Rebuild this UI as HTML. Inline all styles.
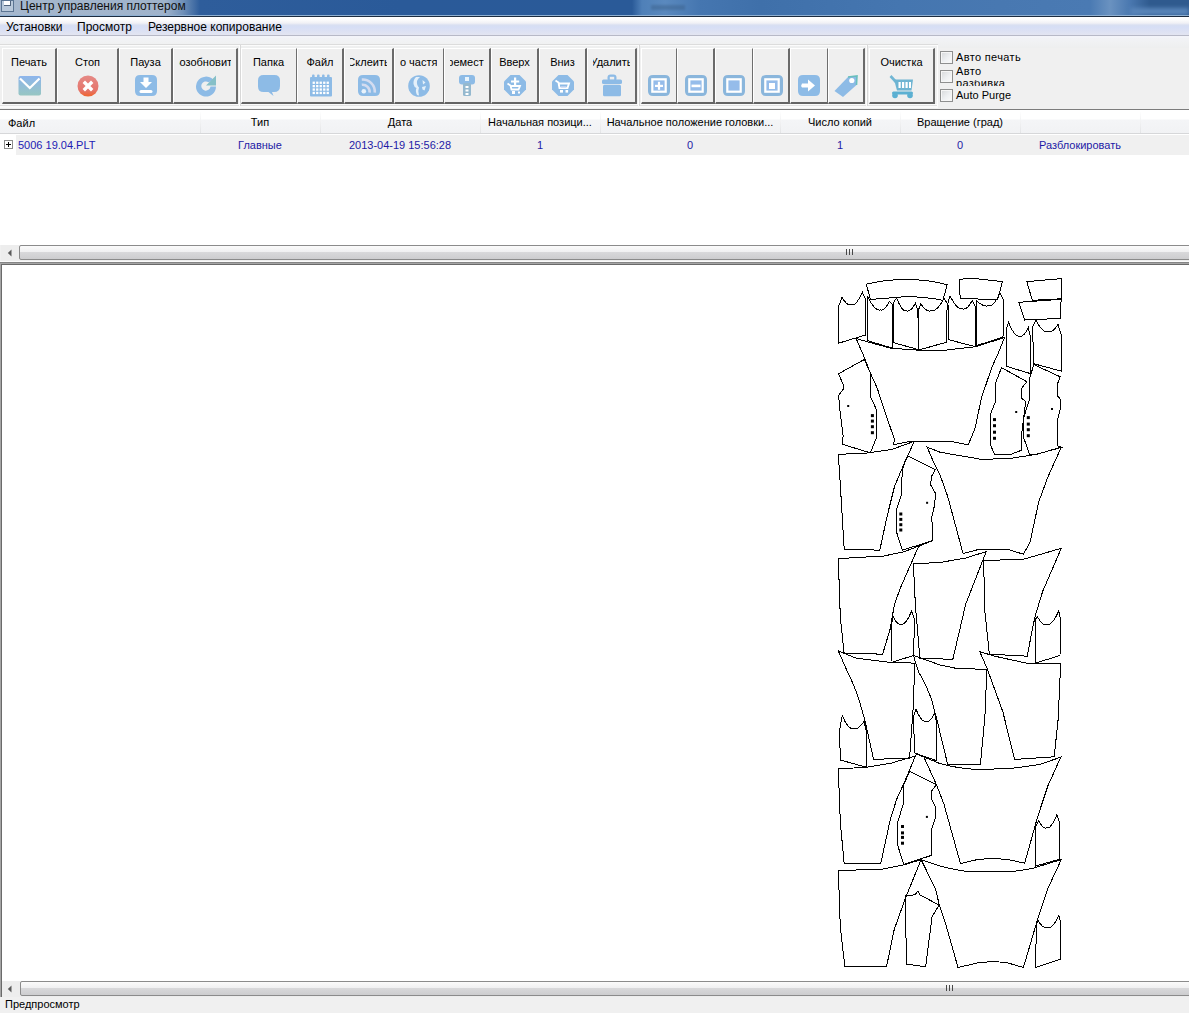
<!DOCTYPE html><html><head><meta charset="utf-8"><style>
*{margin:0;padding:0;box-sizing:border-box}
html,body{width:1189px;height:1013px;overflow:hidden;background:#f0f0f0;font-family:"Liberation Sans",sans-serif;color:#000}
.a{position:absolute}
.t{position:absolute;white-space:nowrap;line-height:14px;height:14px}
.btn{position:absolute;top:48px;height:56px;background:#efefef;border-left:1px solid #fff;border-top:1px solid #fff;border-right:2px solid #6a6a6a;border-bottom:2px solid #646464}
.lbl{position:absolute;top:6px;height:14px;display:flex;justify-content:center;overflow:hidden;font-size:11px;line-height:14px;white-space:nowrap}
.ico{position:absolute;top:25px}
.cell{position:absolute;top:0;height:23px;display:flex;justify-content:center;line-height:23px;white-space:nowrap;overflow:hidden}
.cb{position:absolute;left:940px;width:13px;height:13px;border:1px solid #8e8f8f;background:linear-gradient(135deg,#d6d8da 0,#eef0f2 55%,#fbfbfb 100%);box-shadow:inset 0 0 0 1px #f6f6f6}
</style></head><body>
<div class="a" style="left:0;top:0;width:1189px;height:16px;background:linear-gradient(90deg,#a6b8ce 0,#9fb3cb 165px,#6f90b8 183px,#2e5d9b 200px,#2a5a99 400px,#2a5a98 632px,#4f80b8 642px,#5a89be 665px,#4576b0 700px,#3f70aa 760px,#4576b0 900px,#4878b1 1000px,#4a7ab3 1090px,#6a92c0 1110px,#4a78b0 1130px,#2f5a8e 1150px,#2f5a8e 1189px)"></div>
<div class="a" style="left:1130px;top:8px;width:59px;height:7px;background:#5a86ba;filter:blur(2px)"></div>
<div class="a" style="left:651px;top:5px;width:34px;height:5px;background:#3a5f88;opacity:.45;filter:blur(1.2px)"></div>
<div class="a" style="left:0;top:15px;width:1189px;height:1px;background:#8fb0d2"></div>
<div class="a" style="left:0;top:16px;width:1189px;height:1px;background:#1c2c40"></div>
<div class="a" style="left:1px;top:0;width:13px;height:12px;border:1px solid #5b7593;background:#b9c9db"></div>
<div class="a" style="left:4px;top:1px;width:7px;height:5px;background:#fff;border-right:1px solid #50647e;border-bottom:1px solid #50647e"></div>
<div class="t" style="left:20px;top:-1px;font-size:12px;color:#101010">Центр управления плоттером</div>
<div class="a" style="left:0;top:17px;width:1189px;height:19px;background:linear-gradient(180deg,#ffffff 0,#fbfbfc 3px,#f1f1f5 6px,#e6e9f4 7px,#d9dff1 8px,#d6def5 10px,#dce1f3 14px,#e3e5f1 18px);border-bottom:1px solid #b7b9c7"></div>
<div class="a" style="left:0;top:36px;width:1189px;height:2px;background:#f3f4f9"></div>
<div class="t" style="left:6px;top:20px;font-size:12px">Установки</div>
<div class="t" style="left:77px;top:20px;font-size:12px">Просмотр</div>
<div class="t" style="left:148px;top:20px;font-size:12px">Резервное копирование</div>
<div class="a" style="left:0;top:38px;width:1189px;height:10px;background:linear-gradient(180deg,#f2f3f6,#eeefef)"></div>
<div class="a" style="left:0;top:44px;width:938px;height:1px;background:#dcdcdc"></div>
<div class="a" style="left:0;top:45px;width:938px;height:1px;background:#fbfbfb"></div>
<div class="a" style="left:0;top:104px;width:938px;height:1px;background:#fafafa"></div>
<div class="a" style="left:0;top:105px;width:938px;height:1px;background:#e2e2e2"></div>
<div class="a" style="left:0;top:106px;width:938px;height:2px;background:#fafafa"></div>
<div class="a" style="left:239px;top:45px;width:1px;height:61px;background:#fdfdfd"></div>
<div class="a" style="left:240px;top:45px;width:1px;height:61px;background:#d8d8d8"></div>
<div class="a" style="left:638px;top:45px;width:1px;height:61px;background:#fdfdfd"></div>
<div class="a" style="left:639px;top:45px;width:1px;height:61px;background:#d8d8d8"></div>
<div class="a" style="left:866px;top:45px;width:1px;height:61px;background:#fdfdfd"></div>
<div class="a" style="left:867px;top:45px;width:1px;height:61px;background:#d8d8d8"></div>
<div class="a" style="left:937px;top:45px;width:1px;height:61px;background:#fdfdfd"></div>
<div class="btn" style="left:2px;width:55px"><div class="lbl" style="left:5px;width:42px"><span>Печать</span></div><div class="ico" style="left:15px"><svg width="24" height="24" viewBox="0 0 24 24"><defs><linearGradient id="gm" x1="0" y1="0" x2="0" y2="1"><stop offset="0" stop-color="#8db5ec"/><stop offset="1" stop-color="#97c6c2"/></linearGradient></defs><rect x="0.5" y="2" width="22.5" height="19.5" rx="2" fill="url(#gm)"/><path d="M2 4.5 L11.8 14 L21.5 4.5" stroke="#fff" stroke-width="2.2" fill="none"/></svg></div></div>
<div class="btn" style="left:57px;width:62px"><div class="lbl" style="left:5px;width:49px"><span>Стоп</span></div><div class="ico" style="left:18px"><svg width="24" height="24" viewBox="0 0 24 24"><defs><linearGradient id="gs" x1="0" y1="0" x2="0" y2="1"><stop offset="0" stop-color="#e58a86"/><stop offset="0.7" stop-color="#e5756c"/><stop offset="1" stop-color="#f0642c"/></linearGradient></defs><circle cx="12" cy="12" r="10.5" fill="url(#gs)"/><path d="M7.8 7.8 L16.2 16.2 M16.2 7.8 L7.8 16.2" stroke="#fff" stroke-width="3.4"/></svg></div></div>
<div class="btn" style="left:119px;width:54px"><div class="lbl" style="left:5px;width:41px"><span>Пауза</span></div><div class="ico" style="left:14px"><svg width="24" height="24" viewBox="0 0 24 24"><path d="M6 1 H18 Q23 1 23 6 V17 Q23 22 18 22 H6 Q1 22 1 17 V6 Q1 1 6 1 Z" fill="#8dbbe6"/><path d="M9.5 3.5 H14.5 V8 H18 L12 14 L6 8 H9.5 Z" fill="#fff"/><rect x="5.5" y="16" width="13" height="3" rx="1.5" fill="#fff"/></svg></div></div>
<div class="btn" style="left:173px;width:65px"><div class="lbl" style="left:5px;width:52px"><span>Возобновить</span></div><div class="ico" style="left:20px"><svg width="24" height="24" viewBox="0 0 24 24"><path d="M19.5 6 A10 10 0 1 0 22 12.5 L16.5 12.5 A4.6 4.6 0 1 1 14.5 8.2 Z" fill="#8dbbe6"/><path d="M12 11.5 L22 11.5 L22 1.5 Z" fill="#86c0c8"/></svg></div></div>
<div class="btn" style="left:241px;width:56px;border-right:1px solid #6e6e6e"><div class="lbl" style="left:5px;width:43px"><span>Папка</span></div><div class="ico" style="left:15px"><svg width="24" height="24" viewBox="0 0 24 24"><path d="M6.5 1 H17.5 Q23 1 23 6.5 V12 Q23 18 17 18 H15 L16.5 22 L11.5 18 H6.5 Q1 18 1 12.5 V6.5 Q1 1 6.5 1 Z" fill="#8dbbe6"/></svg></div></div>
<div class="btn" style="left:297px;width:47px"><div class="lbl" style="left:5px;width:34px"><span>Файл</span></div><div class="ico" style="left:11px"><svg width="24" height="24" viewBox="0 0 24 24"><rect x="1" y="3" width="22" height="19.5" rx="1" fill="#8dbbe6"/><rect x="3" y="0.5" width="2.6" height="5" rx="1" fill="#8dbbe6"/><rect x="8" y="0.5" width="2.6" height="5" rx="1" fill="#8dbbe6"/><rect x="13" y="0.5" width="2.6" height="5" rx="1" fill="#8dbbe6"/><rect x="18" y="0.5" width="2.6" height="5" rx="1" fill="#8dbbe6"/><rect x="3.6" y="7.6" width="2.3" height="2.3" fill="#fff"/><rect x="3.6" y="11.0" width="2.3" height="2.3" fill="#fff"/><rect x="3.6" y="14.4" width="2.3" height="2.3" fill="#fff"/><rect x="3.6" y="17.8" width="2.3" height="2.3" fill="#fff"/><rect x="7.1" y="7.6" width="2.3" height="2.3" fill="#fff"/><rect x="7.1" y="11.0" width="2.3" height="2.3" fill="#fff"/><rect x="7.1" y="14.4" width="2.3" height="2.3" fill="#fff"/><rect x="7.1" y="17.8" width="2.3" height="2.3" fill="#fff"/><rect x="10.6" y="7.6" width="2.3" height="2.3" fill="#fff"/><rect x="10.6" y="11.0" width="2.3" height="2.3" fill="#fff"/><rect x="10.6" y="14.4" width="2.3" height="2.3" fill="#fff"/><rect x="10.6" y="17.8" width="2.3" height="2.3" fill="#fff"/><rect x="14.1" y="7.6" width="2.3" height="2.3" fill="#fff"/><rect x="14.1" y="11.0" width="2.3" height="2.3" fill="#fff"/><rect x="14.1" y="14.4" width="2.3" height="2.3" fill="#fff"/><rect x="14.1" y="17.8" width="2.3" height="2.3" fill="#fff"/><rect x="17.6" y="7.6" width="2.3" height="2.3" fill="#fff"/><rect x="17.6" y="11.0" width="2.3" height="2.3" fill="#fff"/><rect x="17.6" y="14.4" width="2.3" height="2.3" fill="#fff"/><rect x="17.6" y="17.8" width="2.3" height="2.3" fill="#fff"/></svg></div></div>
<div class="btn" style="left:344px;width:50px"><div class="lbl" style="left:5px;width:37px"><span>Склеить</span></div><div class="ico" style="left:12px"><svg width="24" height="24" viewBox="0 0 24 24"><path d="M6 1 H18 Q23 1 23 6 V17 Q23 22 18 22 H6 Q1 22 1 17 V6 Q1 1 6 1 Z" fill="#8dbbe6"/><circle cx="6.8" cy="17.2" r="2.3" fill="#e8f2fb"/><path d="M4.8 10.8 A7 7 0 0 1 12.6 18.6" stroke="#d3dcf0" stroke-width="2.6" fill="none"/><path d="M4.8 5.6 A12.2 12.2 0 0 1 17.8 18.6" stroke="#d3dcf0" stroke-width="2.6" fill="none"/></svg></div></div>
<div class="btn" style="left:394px;width:50px;border-right:1px solid #6e6e6e"><div class="lbl" style="left:5px;width:37px"><span>По частям</span></div><div class="ico" style="left:12px"><svg width="24" height="24" viewBox="0 0 24 24"><circle cx="12" cy="12" r="10.8" fill="#8dbbe6"/><path d="M9 3 Q6 6 6.5 10 Q7 13 9.5 14 Q8 17 10 21 L12 21.5 Q10.5 17 12 13.5 Q9.5 11 10 7 Q11 4.5 13 3 Z" fill="#e4f0fa"/><path d="M15.5 6 L18.5 8.5 L16 10.5 Z M15 13 L19 12 L17.5 16.5 L15.5 15.5 Z" fill="#e4f0fa"/></svg></div></div>
<div class="btn" style="left:444px;width:47px"><div class="lbl" style="left:5px;width:34px"><span>Переместить</span></div><div class="ico" style="left:13px"><svg width="18" height="24" viewBox="0 0 18 24"><rect x="1" y="1" width="16" height="9.5" rx="3" fill="#8dbbe6"/><rect x="5" y="9" width="8" height="13" rx="1.5" fill="#95b9cf"/><rect x="7" y="3" width="4" height="4" fill="#e8f4fc"/><rect x="7.5" y="12" width="3" height="2" fill="#fff"/><rect x="7.5" y="15.5" width="3" height="2" fill="#fff"/><rect x="7.5" y="19" width="3" height="2" fill="#fff"/></svg></div></div>
<div class="btn" style="left:491px;width:48px"><div class="lbl" style="left:5px;width:35px"><span>Вверх</span></div><div class="ico" style="left:11px"><svg width="24" height="24" viewBox="0 0 24 24"><path d="M7.5 1 H16.5 L23 7.5 V15.5 L16.5 22 H7.5 L1 15.5 V7.5 Z" fill="#8dbbe6"/><path d="M11 3.5 H13.2 V6.5 H16.2 V8.6 H13.2 V11 H11 V8.6 H8 V6.5 H11 Z" fill="#fff"/><path d="M4.5 9.5 L7.5 11.5 L8.5 15.5 H15.5 L17 12 H8.5" stroke="#fff" stroke-width="1.8" fill="none"/><rect x="9" y="17" width="3" height="3" fill="#fff"/><rect x="15" y="17.5" width="2" height="2" fill="#fff"/></svg></div></div>
<div class="btn" style="left:539px;width:48px"><div class="lbl" style="left:5px;width:35px"><span>Вниз</span></div><div class="ico" style="left:11px"><svg width="24" height="24" viewBox="0 0 24 24"><path d="M7.5 1 H16.5 L23 7.5 V15.5 L16.5 22 H7.5 L1 15.5 V7.5 Z" fill="#8dbbe6"/><path d="M4.5 6.5 L7.5 8.5 L8.5 14 H16.5 L18 9.5 H8.5" stroke="#fff" stroke-width="1.9" fill="none"/><rect x="9.5" y="12" width="6" height="1.6" fill="#bcd0f0"/><rect x="9" y="16" width="3" height="2.6" fill="#fff"/><rect x="14.5" y="16" width="2.6" height="2.6" fill="#fff"/></svg></div></div>
<div class="btn" style="left:587px;width:50px"><div class="lbl" style="left:5px;width:37px"><span>Удалить</span></div><div class="ico" style="left:12px"><svg width="24" height="24" viewBox="0 0 24 24"><rect x="7.5" y="0.5" width="9" height="7" rx="3" fill="#8dbbe6"/><rect x="9.8" y="2.8" width="4.4" height="3" fill="#efefef"/><rect x="2" y="5.5" width="20" height="4.5" rx="1.5" fill="#8dbbe6"/><rect x="3" y="10.8" width="18" height="11.5" rx="1.5" fill="#8dbbe6"/></svg></div></div>
<div class="btn" style="left:641px;width:36px;border-right:1px solid #6e6e6e"><div class="ico" style="left:5px"><svg width="24" height="24" viewBox="0 0 24 24"><path d="M6 1 H18 Q23 1 23 6 V17 Q23 22 18 22 H6 Q1 22 1 17 V6 Q1 1 6 1 Z" fill="#8ab6dc"/><rect x="5.3" y="5.3" width="13.4" height="12.4" fill="#95bcea" stroke="#fff" stroke-width="2.2"/><rect x="8" y="10.8" width="8" height="2.2" fill="#fff"/><rect x="10.9" y="7.8" width="2.2" height="8" fill="#fff"/></svg></div></div>
<div class="btn" style="left:677px;width:38px"><div class="ico" style="left:6px"><svg width="24" height="24" viewBox="0 0 24 24"><path d="M6 1 H18 Q23 1 23 6 V17 Q23 22 18 22 H6 Q1 22 1 17 V6 Q1 1 6 1 Z" fill="#8ab6dc"/><rect x="5.3" y="5.3" width="13.4" height="12.4" fill="#95bcea" stroke="#fff" stroke-width="2.2"/><rect x="7.5" y="10.6" width="9" height="2.6" fill="#fff"/></svg></div></div>
<div class="btn" style="left:715px;width:38px;border-right:1px solid #6e6e6e"><div class="ico" style="left:6px"><svg width="24" height="24" viewBox="0 0 24 24"><path d="M6 1 H18 Q23 1 23 6 V17 Q23 22 18 22 H6 Q1 22 1 17 V6 Q1 1 6 1 Z" fill="#8ab6dc"/><rect x="5.3" y="5.3" width="13.4" height="12.4" fill="#95bcea" stroke="#fff" stroke-width="2.2"/></svg></div></div>
<div class="btn" style="left:753px;width:37px"><div class="ico" style="left:6px"><svg width="24" height="24" viewBox="0 0 24 24"><path d="M6 1 H18 Q23 1 23 6 V17 Q23 22 18 22 H6 Q1 22 1 17 V6 Q1 1 6 1 Z" fill="#8ab6dc"/><rect x="5.3" y="5.3" width="13.4" height="12.4" fill="#95bcea" stroke="#fff" stroke-width="2.2"/><rect x="9" y="9" width="6" height="6" fill="#fff"/></svg></div></div>
<div class="btn" style="left:790px;width:38px;border-right:1px solid #6e6e6e"><div class="ico" style="left:6px"><svg width="24" height="24" viewBox="0 0 24 24"><path d="M6 1 H18 Q23 1 23 6 V17 Q23 22 18 22 H6 Q1 22 1 17 V6 Q1 1 6 1 Z" fill="#8dbbe6"/><path d="M5 9.5 H11 V5.5 L18 11.5 L11 17.5 V13.5 H5 Q3.5 11.5 5 9.5 Z" fill="#fff"/></svg></div></div>
<div class="btn" style="left:828px;width:37px"><div class="ico" style="left:4px"><svg width="26" height="24" viewBox="0 0 26 24"><path d="M1.5 17 L15 3 L24 2 L23.5 11 L10 23 Z" fill="#8dbbe6"/><path d="M15 3 L24 2 L23.5 11" stroke="#69bfbd" stroke-width="1.6" fill="none"/><circle cx="18.8" cy="6.5" r="2.6" fill="#fff"/></svg></div></div>
<div class="btn" style="left:869px;width:66px"><div class="lbl" style="left:5px;width:53px"><span>Очистка</span></div><div class="ico" style="left:19px"><svg width="26" height="24" viewBox="0 0 26 24" style="margin-top:1px"><path d="M1.5 1 L7 7" stroke="#71b6d4" stroke-width="2.6"/><path d="M5 4.5 H24 L22.5 15.5 H8 Z" fill="#6eb4d2"/><rect x="9.5" y="7" width="2.2" height="6" fill="#fff"/><rect x="13" y="7" width="2.2" height="6" fill="#fff"/><rect x="16.5" y="7" width="2.2" height="6" fill="#fff"/><rect x="20" y="7" width="2" height="6" fill="#fff"/><rect x="3" y="16.5" width="21" height="3" rx="1.5" fill="#5cb0d2"/><circle cx="6" cy="20.5" r="2.8" fill="#5cb0d2"/><circle cx="21" cy="20.5" r="2.8" fill="#5cb0d2"/></svg></div></div>
<div class="cb" style="top:51px"></div>
<div class="cb" style="top:70px"></div>
<div class="cb" style="top:89px"></div>
<div class="t" style="left:956px;top:50px;font-size:11px;letter-spacing:0.35px">Авто печать</div>
<div class="t" style="left:956px;top:64px;font-size:11px;letter-spacing:0.35px">Авто</div>
<div class="a" style="left:956px;top:80px;width:80px;height:6px;overflow:hidden"><div class="t" style="left:0;top:-4px;font-size:11px;letter-spacing:0.35px">разбивка</div></div>
<div class="t" style="left:956px;top:88px;font-size:11px">Auto Purge</div>
<div class="a" style="left:0;top:109px;width:1189px;height:1px;background:#7c7c7c"></div>
<div class="a" style="left:0;top:110px;width:1189px;height:135px;background:#fff"></div>
<div class="a" style="left:0;top:110px;width:1189px;height:24px;background:linear-gradient(180deg,#ffffff 0,#ffffff 9px,#f4f5f7 10px,#f1f2f4 100%)"></div>
<div class="a" style="left:0;top:133px;width:1189px;height:1px;background:#d6d7d9"></div>
<div class="a" style="left:200px;top:111px;width:1px;height:22px;background:linear-gradient(180deg,#fff,#e3e4e6)"></div>
<div class="a" style="left:320px;top:111px;width:1px;height:22px;background:linear-gradient(180deg,#fff,#e3e4e6)"></div>
<div class="a" style="left:480px;top:111px;width:1px;height:22px;background:linear-gradient(180deg,#fff,#e3e4e6)"></div>
<div class="a" style="left:600px;top:111px;width:1px;height:22px;background:linear-gradient(180deg,#fff,#e3e4e6)"></div>
<div class="a" style="left:780px;top:111px;width:1px;height:22px;background:linear-gradient(180deg,#fff,#e3e4e6)"></div>
<div class="a" style="left:900px;top:111px;width:1px;height:22px;background:linear-gradient(180deg,#fff,#e3e4e6)"></div>
<div class="a" style="left:1020px;top:111px;width:1px;height:22px;background:linear-gradient(180deg,#fff,#e3e4e6)"></div>
<div class="a" style="left:1140px;top:111px;width:1px;height:22px;background:linear-gradient(180deg,#fff,#e3e4e6)"></div>
<div class="t" style="left:8px;top:116px;font-size:11px">Файл</div>
<div class="cell" style="left:200px;width:120px;top:111px;font-size:11px">Тип</div>
<div class="cell" style="left:320px;width:160px;top:111px;font-size:11px">Дата</div>
<div class="cell" style="left:480px;width:120px;top:111px;font-size:11px">Начальная позици...</div>
<div class="cell" style="left:600px;width:180px;top:111px;font-size:11px">Начальное положение головки...</div>
<div class="cell" style="left:780px;width:120px;top:111px;font-size:11px">Число копий</div>
<div class="cell" style="left:900px;width:120px;top:111px;font-size:11px">Вращение (град)</div>
<div class="cell" style="left:1020px;width:120px;top:111px;font-size:11px"></div>
<div class="a" style="left:16px;top:135px;width:1173px;height:20px;background:#f0f0f0"></div>
<div class="a" style="left:4px;top:140px;width:9px;height:9px;border:1px solid #8c8c8c;background:#fff"></div>
<div class="a" style="left:6px;top:144px;width:5px;height:1px;background:#000"></div>
<div class="a" style="left:8px;top:142px;width:1px;height:5px;background:#000"></div>
<div class="t" style="left:18px;top:138px;font-size:11px;color:#2220b4">5006 19.04.PLT</div>
<div class="cell" style="left:200px;width:120px;top:135px;height:21px;line-height:21px;font-size:11px;color:#1e1aa6">Главные</div>
<div class="cell" style="left:320px;width:160px;top:135px;height:21px;line-height:21px;font-size:11px;color:#1e1aa6">2013-04-19 15:56:28</div>
<div class="cell" style="left:480px;width:120px;top:135px;height:21px;line-height:21px;font-size:11px;color:#1e1aa6">1</div>
<div class="cell" style="left:600px;width:180px;top:135px;height:21px;line-height:21px;font-size:11px;color:#1e1aa6">0</div>
<div class="cell" style="left:780px;width:120px;top:135px;height:21px;line-height:21px;font-size:11px;color:#1e1aa6">1</div>
<div class="cell" style="left:900px;width:120px;top:135px;height:21px;line-height:21px;font-size:11px;color:#1e1aa6">0</div>
<div class="cell" style="left:1020px;width:120px;top:135px;height:21px;line-height:21px;font-size:11px;color:#1e1aa6">Разблокировать</div>
<div class="a" style="left:1px;top:245px;width:1188px;height:16px;background:#ededed"></div><svg class="a" style="left:7px;top:249px" width="5" height="8" viewBox="0 0 5 8"><path d="M4.5 0.5 L0.8 4 L4.5 7.5 Z" fill="#5a5a5a"/></svg><div class="a" style="left:19px;top:245px;width:1174px;height:15px;border:1px solid #8b8b8b;border-radius:2px;background:linear-gradient(180deg,#fbfbfb 0,#f0f0f1 45%,#d9d9db 46%,#cdcdcf 100%)"></div><div class="a" style="left:846px;top:249px;width:1px;height:6px;background:#484848"></div><div class="a" style="left:849px;top:249px;width:1px;height:6px;background:#484848"></div><div class="a" style="left:852px;top:249px;width:1px;height:6px;background:#484848"></div>
<div class="a" style="left:0;top:261px;width:1189px;height:1px;background:#fafafa"></div>
<div class="a" style="left:0;top:262px;width:1189px;height:1px;background:#858585"></div>
<div class="a" style="left:0;top:263px;width:1189px;height:1px;background:#a5a5a5"></div>
<div class="a" style="left:1px;top:264px;width:1188px;height:1px;background:#6a6a6a"></div>
<div class="a" style="left:0;top:263px;width:1px;height:734px;background:#a5a5a5"></div>
<div class="a" style="left:1px;top:264px;width:1px;height:733px;background:#6a6a6a"></div>
<div class="a" style="left:2px;top:265px;width:1187px;height:716px;background:#fff"></div>
<svg class="a" style="left:0;top:0" width="1189" height="1013" viewBox="0 0 1189 1013">
<g fill="none" stroke="#000" stroke-width="1" stroke-linejoin="miter" shape-rendering="crispEdges">
<path d="M838.6 343.2 L838.6 306.3 L842.1 297.3 Q847.1 306.3 851.2 304.8 Q856.2 306.3 862.3 292.2 L865.3 298.3 L865.3 335.1 Z"/>
<path d="M866.3 284.1 Q907.7 274.5 947.1 284.6 L943 300.3 Q919 295.5 896.6 297.3 Q880 299 870.4 299.3 Z"/>
<path d="M867.3 340.6 L867.3 298.0 L867.8 296.7 Q874.8 311.4 880.5 309.9 Q884.5 311.4 889.5 301.3 L892.6 304.3 L892.6 348.2 Z"/>
<path d="M893.6 342.7 L893.6 302.3 L896.6 297.8 Q902.2 312.4 906.7 310.9 Q910.6 312.4 915.3 303.3 L917.8 310.4 L918.8 349.7 Z"/>
<path d="M918.8 350.0 L918.3 310.4 L920.8 303.8 Q926.4 312.4 930.9 310.9 Q936.8 312.4 944.0 298.3 L947.1 303.3 L946.6 342.2 Z"/>
<path d="M959.6 279.1 L975.3 278.6 L1002.5 281.6 L997.5 299.8 L960.1 298.3 Z"/>
<path d="M948.5 339.6 L948.0 303.3 L950.0 295.7 Q957.0 310.4 962.7 308.9 Q967.0 310.4 972.3 300.3 L975.3 306.3 L975.3 346.7 Z"/>
<path d="M976.3 345.7 L976.3 300.3 L976.3 300.3 Q983.0 307.3 988.4 305.8 Q993.6 307.3 1000.0 292.7 L1003.5 300.3 L1003.0 337.1 Z"/>
<path d="M1026.8 281.6 L1061.6 278.6 L1061.1 298.8 L1032.3 300.3 Z"/>
<path d="M1018.7 302.3 L1061.1 299.3 L1060.6 318.4 L1024.7 320.0 Z"/>
<path d="M1006.6 366.4 L1006.1 329.5 L1008.6 322.5 Q1014.7 337.6 1019.7 336.1 Q1023.6 337.6 1028.3 327.5 L1030.8 338.6 L1030.8 373.7 Z"/>
<path d="M1033.3 363.6 L1032.8 326.5 L1035.8 320.0 Q1042.5 333.1 1048.0 331.6 Q1052.5 333.1 1058.0 324.5 L1061.1 334.6 L1061.1 371.1 Z"/>
<path d="M856.2 338.6 L890.6 348.2 L918.8 350.2 L945.0 350.2 L975.3 346.7 L1004.5 337.6 L997.5 355.0 L991.9 367.1 L981.3 398.4 L975.3 427.7 L968.2 444.8 L950.0 441.3 L910.7 441.3 L893.1 444.8 L894.6 440.0 L883.0 406.0 L877.3 388.3 L870.4 373.2 L863.3 355.0 Z"/>
<path d="M838.6 373.7 L864.3 359.5 L870.4 373.2 L870.9 397.4 L876.4 409.5 L876.4 437.8 L870.4 452.9 L842.6 444.3 L843.1 435.7 L839.6 407.5 L838.6 395.4 L843.1 389.3 L843.1 384.3 Z"/>
<path d="M1001.5 367.6 L1026.8 381.7 L1021.7 388.3 L1021.7 398.4 L1025.7 401.4 L1021.7 433.7 L1021.2 450.4 L1010.6 454.4 L994.5 454.4 L990.4 444.8 L990.4 414.5 L995.5 401.4 L995.5 383.3 Z"/>
<path d="M1033.8 364.6 L1060.1 376.7 L1057.0 385.3 L1057.0 395.4 L1060.6 399.4 L1060.1 410.0 L1057.0 421.6 L1057.0 445.8 L1061.6 447.4 L1035.8 454.4 L1029.8 455.0 L1023.7 437.8 L1023.7 417.6 L1029.8 398.4 L1029.8 377.7 Z"/>
<path d="M838.3 454.2 L863.2 453.6 L891.6 449.5 L912.9 441.8 L914.1 441.8 L904.6 462.5 L894.6 486.2 L886.9 517.0 L879.8 550.2 L844.2 549.0 L840.1 481.5 Z"/>
<path d="M908.2 456.0 L935.4 469.6 L931.3 476.7 L930.7 485.0 L935.4 493.3 L934.8 504.0 L931.9 517.0 L932.5 540.7 L902.3 550.2 L896.3 531.2 L896.9 508.7 L901.1 495.7 L902.3 470.8 L904.6 463.1 Z"/>
<path d="M927.1 447.1 L940.0 452.2 L981.1 459.3 L1009.3 458.6 L1037.6 454.1 L1061.3 447.1 L1047.8 477.2 L1038.8 501.6 L1029.9 542.7 L1023.4 554.2 L1009.3 549.8 L993.9 549.1 L977.2 549.8 L963.1 553.6 L947.7 496.5 L940.2 475.5 L934.2 463.7 Z"/>
<path d="M838.3 558.6 L883.9 556.0 L904.5 551.6 L932.7 540.6 L918.6 546.4 L900.0 588.8 L894.2 605.5 L890.3 628.6 L882.6 654.2 L844.1 653.0 L840.3 617.0 Z"/>
<path d="M891.0 662.6 L891.5 625.0 L892.9 616.4 Q897.5 625.6 901.2 624.1 Q905.8 625.6 911.5 611.2 L914.7 619.6 L913.4 655.5 Z"/>
<path d="M913.4 563.7 L940.0 562.5 L965.7 558.0 L986.2 551.6 L965.7 604.2 L952.8 659.4 L919.9 658.1 L915.4 605.5 Z"/>
<path d="M983.6 560.5 L1023.4 559.3 L1061.3 548.3 L1042.7 591.3 L1035.6 614.5 L1032.4 628.6 L1027.3 656.2 L989.4 654.2 L984.9 611.9 Z"/>
<path d="M1035.0 663.2 L1035.0 619.6 L1037.6 617.0 Q1042.5 626.2 1046.5 624.7 Q1052.0 626.2 1058.7 611.2 L1060.7 619.6 L1060.0 655.5 Z"/>
<path d="M838.3 650.9 L855.7 658 L890.3 662.5 L914.7 663.1 L913.4 704.2 L909.6 758.1 L873.6 759.4 L865.3 722.2 Q857 690 849.3 675.9 Z"/>
<path d="M840.3 760.0 L839.6 729.9 L842.2 715.7 Q848.5 730.1 853.7 728.6 Q858.3 730.1 864.0 721.5 L866.0 729.9 L866.0 767.1 Z"/>
<path d="M914.7 753.0 L913.4 717.0 L916.0 709.3 Q921.7 723.0 926.3 721.5 Q930.0 723.0 934.6 713.2 L936.5 722.2 L936.5 760.7 Z"/>
<path d="M913.4 655.4 L927.6 660.5 L940 665 L955.4 668.2 L986.9 669.5 L984.9 717 L980.4 764.5 L947.7 764.5 L937.8 723.4 L931.4 699 Q924 680 918.6 672.1 Z"/>
<path d="M979.8 651.6 L993.9 656.0 L1026.0 663.1 L1060.7 663.1 L1058.1 719.6 L1054.2 756.8 L1014.5 759.4 L1002.9 711.9 L987.5 669.5 Z"/>
<path d="M838.3 768.7 L864.7 767.5 L891.6 763.0 L915.4 755.9 L904.5 782.2 L896.8 798.9 L890.3 819.5 L880.7 863.7 L844.1 863.1 L840.3 822.0 Z"/>
<path d="M909.6 771.3 L936.5 784.8 L931.4 791.2 L931.4 798.9 L935.3 806.6 L935.3 818.2 L931.4 829.7 L931.4 855.4 L903.8 864.4 L898.0 846.4 L897.4 823.3 L903.2 804.0 L903.8 784.8 Z"/>
<path d="M914.7 753.3 L940 763.6 Q960 769 978.5 769.4 L1006.8 768.7 Q1025 767 1040.1 764.3 L1060.7 757.2 L1047.8 786.1 L1037.6 816.9 L1024.7 863.1 L1009.3 859.9 Q1000 858.6 992.6 858.6 Q983 858.8 975.9 859.9 L960.5 863.7 L943.9 804 L936.5 784.8 L923.7 756.6 Z"/>
<path d="M1035.0 866.3 L1035.0 827.2 L1038.8 820.7 Q1043.0 829.3 1046.5 827.8 Q1051.1 829.3 1056.8 815.0 L1060.0 823.3 L1059.4 859.2 Z"/>
<path d="M838.3 870.5 L881.3 869.3 L904.5 864.8 L921.1 859.6 L905.7 897.5 L894.2 929.6 L886.5 966.8 L844.8 966.2 L840.3 927.0 Z"/>
<path d="M905.7 895.6 L914.7 894.9 L917.9 891.1 L919.9 894.9 L925.0 897.5 L939.1 905.2 L932.0 916.8 L931.4 921.9 L925.6 966.8 L907.0 964.2 L905.1 914.2 Z"/>
<path d="M921.1 859.6 L940 866 Q955 870 965.7 871.2 L1014.5 871.2 Q1025 870 1033.7 868 L1061.3 859.6 L1047.8 888.5 L1037.6 919.3 L1023.4 967.5 L1008 963 Q1000 961.7 991.3 961.7 Q984 962 977.2 963 L958 967.5 L945.1 921.9 L939.1 903.9 L935.3 888.5 Z"/>
<path d="M1035.6 967.5 L1036.3 927.0 L1037.6 920.0 Q1043.2 929.2 1047.8 927.7 Q1052.7 929.2 1058.7 915.5 L1060.7 921.9 L1060.7 959.1 Z"/>
</g><g fill="#000">
<rect x="870.9" y="414.1" width="3" height="3"/>
<rect x="870.9" y="419.6" width="3" height="3"/>
<rect x="870.9" y="425.2" width="3" height="3"/>
<rect x="870.9" y="431.2" width="3" height="3"/>
<rect x="847.2" y="405.0" width="2" height="2"/>
<rect x="993.0" y="418.1" width="3" height="3"/>
<rect x="993.0" y="424.2" width="3" height="3"/>
<rect x="993.0" y="430.7" width="3" height="3"/>
<rect x="993.0" y="436.8" width="3" height="3"/>
<rect x="1015.2" y="411.0" width="2" height="2"/>
<rect x="1026.8" y="416.1" width="3" height="3"/>
<rect x="1026.8" y="422.6" width="3" height="3"/>
<rect x="1026.8" y="428.2" width="3" height="3"/>
<rect x="1026.8" y="434.2" width="3" height="3"/>
<rect x="1051.0" y="408.0" width="2" height="2"/>
<rect x="899.3" y="512.5" width="3" height="3"/>
<rect x="899.3" y="517.9" width="3" height="3"/>
<rect x="899.3" y="523.2" width="3" height="3"/>
<rect x="899.3" y="528.5" width="3" height="3"/>
<rect x="926.1" y="501.8" width="2" height="2"/>
<rect x="901.0" y="825.0" width="3" height="3"/>
<rect x="901.0" y="831.4" width="3" height="3"/>
<rect x="901.0" y="835.9" width="3" height="3"/>
<rect x="901.0" y="841.7" width="3" height="3"/>
<rect x="925.9" y="815.9" width="2" height="2"/>
</g></svg>
<div class="a" style="left:2px;top:981px;width:1187px;height:16px;background:#ededed"></div><svg class="a" style="left:7px;top:985px" width="5" height="8" viewBox="0 0 5 8"><path d="M4.5 0.5 L0.8 4 L4.5 7.5 Z" fill="#5a5a5a"/></svg><div class="a" style="left:20px;top:981px;width:1173px;height:15px;border:1px solid #8b8b8b;border-radius:2px;background:linear-gradient(180deg,#fbfbfb 0,#f0f0f1 45%,#d9d9db 46%,#cdcdcf 100%)"></div><div class="a" style="left:946px;top:985px;width:1px;height:6px;background:#484848"></div><div class="a" style="left:949px;top:985px;width:1px;height:6px;background:#484848"></div><div class="a" style="left:952px;top:985px;width:1px;height:6px;background:#484848"></div>
<div class="a" style="left:0;top:997px;width:1189px;height:16px;background:#f0f0f0"></div>
<div class="t" style="left:5px;top:997px;font-size:11px">Предпросмотр</div>
</body></html>
